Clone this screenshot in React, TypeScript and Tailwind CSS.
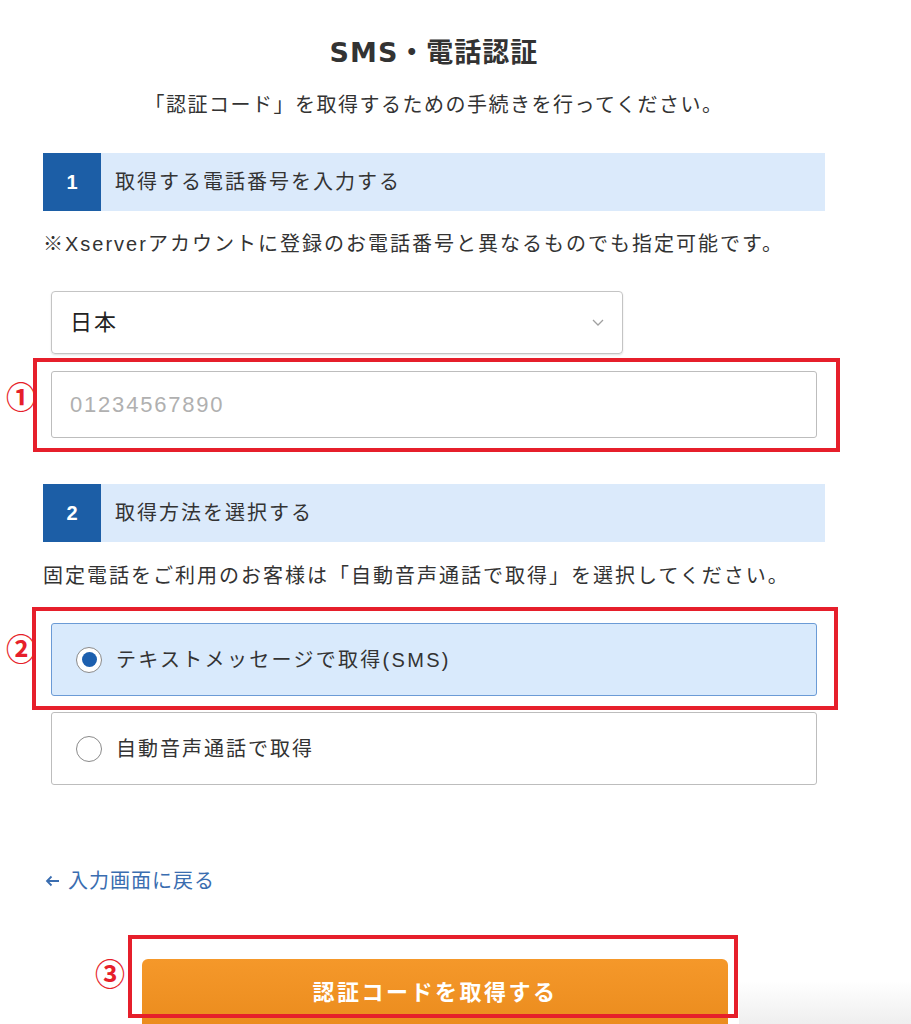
import { ChangeEvent, useState } from "react";

const font = "font-['Liberation_Sans','Noto_Sans_CJK_JP',sans-serif]";

function StepHeader({ num, label }: { num: string; label: string }) {
	return (
		<div className="flex h-[58px] w-[782px] bg-[#dbeafb]">
			<div className="w-[58px] h-full bg-[#1c5ea6] flex items-center justify-center text-white font-bold text-[20px]">
				{num}
			</div>
			<div className="flex items-center pl-[14px] text-[20px] tracking-[2px] text-[#333]">
				{label}
			</div>
		</div>
	);
}

function Radio({ checked }: { checked: boolean }) {
	return (
		<span className="w-[26px] h-[26px] rounded-full border-[1.5px] border-[#8a8a8a] bg-white flex items-center justify-center shrink-0">
			{checked && <span className="w-[15px] h-[15px] rounded-full bg-[#1c5fae]" />}
		</span>
	);
}

function Marker({ n }: { n: string }) {
	return (
		<span className="absolute text-[#e61f2b] text-[30px] leading-none font-bold font-['Noto_Sans_CJK_JP',sans-serif]">
			{n}
		</span>
	);
}

export default function App() {
	let [phone, setPhone] = useState("");
	let [method, setMethod] = useState("sms");

	return (
		<div className={`relative w-[911px] min-h-[1024px] bg-white overflow-hidden ${font} text-[#333]`}>
			<div className="flex flex-col pl-[43px] w-[825px] pt-[35px]">
				<h1 className="text-center text-[27px] leading-[36px] font-bold tracking-[1px] text-[#333] font-['DejaVu_Sans','Noto_Sans_CJK_JP',sans-serif]">
					SMS・電話認証
				</h1>
				<p className="text-center text-[20px] leading-[30px] tracking-[1.5px] mt-[19px]">
					「認証コード」を取得するための手続きを行ってください。
				</p>

				<div className="mt-[33px]">
					<StepHeader num="1" label="取得する電話番号を入力する" />
				</div>
				<p className="text-[20px] leading-[30px] tracking-[2px] mt-[18px]">
					※Xserverアカウントに登録のお電話番号と異なるものでも指定可能です。
				</p>

				<div className="relative ml-[8px] mt-[32px] w-[572px] h-[63px] border-[1.5px] border-[#c4c4c4] rounded-[4px] shadow-[0_1px_2px_rgba(0,0,0,0.12)] flex items-center pl-[18px] pr-[16px]">
					<span className="text-[22px] tracking-[2px] text-[#222] flex-1">日本</span>
					<svg width="12" height="8" viewBox="0 0 12 8" className="mr-[2px]">
						<polyline points="1,1 6,6 11,1" fill="none" stroke="#a0a0a0" strokeWidth="1.3" />
					</svg>
				</div>

				<div className="relative ml-[-10px] mt-[4px] w-[807px] border-[4px] border-[#e61f2b] pt-[9px] pb-[10px] pl-[14px]">
					<span className="left-[-31px] top-[18px] absolute">
						<Marker n="①" />
					</span>
					<input
						value={phone}
						onChange={(e: ChangeEvent<HTMLInputElement>) => setPhone(e.target.value)}
						placeholder="01234567890"
						className="w-[766px] h-[67px] border-[1.5px] border-[#bdbdbd] rounded-[3px] pl-[18px] text-[22px] tracking-[1.8px] text-[#222] placeholder:text-[#b0b0b0] outline-none"
					/>
				</div>

				<div className="mt-[32px]">
					<StepHeader num="2" label="取得方法を選択する" />
				</div>
				<p className="text-[20px] leading-[30px] tracking-[2px] mt-[19px]">
					固定電話をご利用のお客様は「自動音声通話で取得」を選択してください。
				</p>

				<div className="relative ml-[-11px] mt-[16px] w-[806px] border-[4px] border-[#e61f2b] pt-[12px] pb-[10px] pl-[15px]">
					<span className="left-[-30px] top-[21px] absolute">
						<Marker n="②" />
					</span>
					<button
						onClick={() => setMethod("sms")}
						className={`w-[766px] h-[73px] rounded-[3px] flex items-center pl-[24px] gap-[14px] text-left ${
							method === "sms"
								? "bg-[#d9eafc] border-[1.5px] border-[#6b9bd6]"
								: "bg-white border-[1.5px] border-[#bdbdbd]"
						}`}
					>
						<Radio checked={method === "sms"} />
						<span className="text-[20px] tracking-[2.3px] text-[#333]">テキストメッセージで取得(SMS)</span>
					</button>
				</div>
				<button
					onClick={() => setMethod("voice")}
					className={`ml-[8px] mt-[2px] w-[766px] h-[73px] rounded-[3px] flex items-center pl-[24px] gap-[14px] text-left ${
						method === "voice"
							? "bg-[#d9eafc] border-[1.5px] border-[#6b9bd6]"
							: "bg-white border-[1.5px] border-[#bdbdbd]"
					}`}
				>
					<Radio checked={method === "voice"} />
					<span className="text-[20px] tracking-[2px] text-[#333]">自動音声通話で取得</span>
				</button>

				<a href="#" className="ml-[2px] mt-[82px] flex items-center gap-[8px] text-[20px] leading-[28px] tracking-[1px] text-[#3a6db0] w-fit">
					<svg width="15" height="12" viewBox="0 0 15 12">
						<path d="M14 6H2M6.5 1.5 2 6l4.5 4.5" fill="none" stroke="#3a6db0" strokeWidth="1.8" />
					</svg>
					入力画面に戻る
				</a>

				<div className="relative ml-[99px] mt-[64px] w-[586px]">
					<span className="left-[-47px] top-[-2px] absolute">
						<Marker n="③" />
					</span>
					<button className="w-[586px] h-[72px] rounded-[6px] bg-gradient-to-b from-[#f5982a] to-[#ea8b1c] text-white font-bold text-[22px] tracking-[2.5px] flex justify-center pt-[17px]">
						認証コードを取得する
					</button>
					<div className="absolute left-[-14px] top-[-24px] w-[610px] h-[83px] border-[4px] border-[#e61f2b] pointer-events-none" />
				</div>
			</div>
			<div className="absolute right-0 bottom-0 w-[172px] h-[50px] bg-gradient-to-b from-white to-[#ececec] pointer-events-none" />
		</div>
	);
}
